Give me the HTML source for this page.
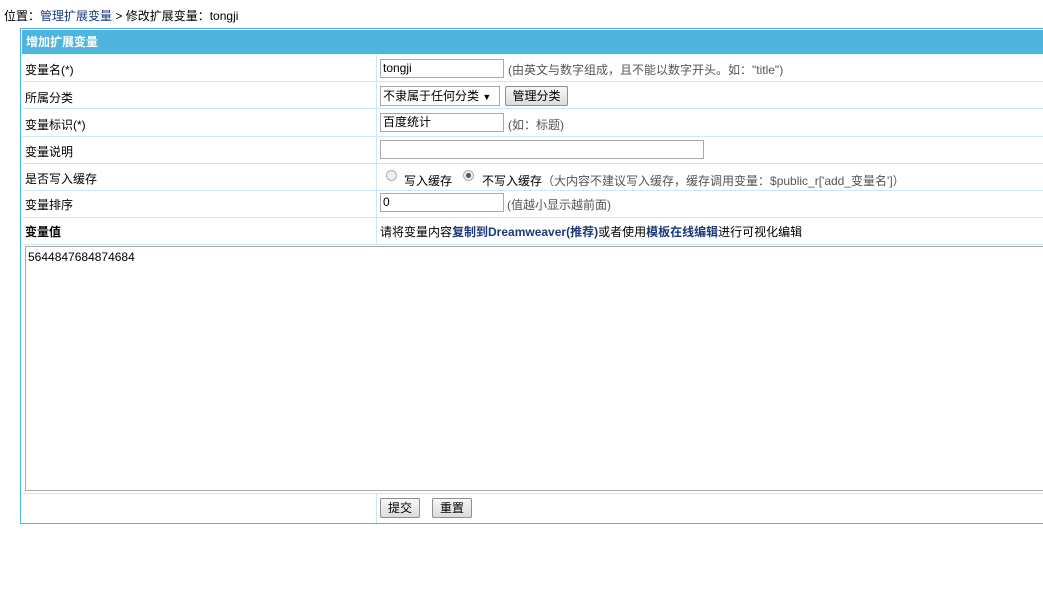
<!DOCTYPE html>
<html><head><meta charset="utf-8"><style>
body{margin:0;width:1043px;height:591px;overflow:hidden;background:#fff;font-family:"Liberation Sans","Noto Sans CJK SC",sans-serif;font-size:12px;color:#000;position:relative}
.a{position:absolute;white-space:nowrap}
a{color:#1a3a7a;text-decoration:none}
.tbl{position:absolute;left:20px;top:28px;width:1040px;height:494px;border:1px solid #4fb4de;border-right:none}
.hd{position:absolute;left:1px;top:1px;right:0;height:24px;background:#4fb4de;color:#fff;font-weight:bold;line-height:24px;padding-left:4px;font-size:12px}
.row{position:absolute;left:1px;right:0;border-bottom:1px solid #cde8f2}
.vl{position:absolute;left:355px;top:26px;height:190px;border-left:1px solid #cde8f2}
.inp{position:absolute;height:18px;border:1px solid #a9a9a9;box-sizing:border-box;font-size:12px;line-height:16px;padding-left:2px;background:#fff}
.btn{position:absolute;height:20px;border:1px solid #8e8e8e;background:linear-gradient(#f7f7f7,#dcdcdc);box-sizing:border-box;line-height:18px;text-align:center;border-radius:2px}
.g{color:#555}
.rad{position:absolute;width:11px;height:11px;border-radius:50%;border:1px solid #b0b0b0;background:#eee;box-sizing:border-box}
</style></head><body>
<div class="a" style="left:4px;top:7px">位置：<a>管理扩展变量</a> &gt; 修改扩展变量：tongji</div>
<div class="tbl">
<div class="hd">增加扩展变量</div>
<div class="row" style="top:26px;height:26px"></div>
<div class="row" style="top:53px;height:26px"></div>
<div class="row" style="top:80px;height:27px"></div>
<div class="row" style="top:108px;height:26px"></div>
<div class="row" style="top:135px;height:26px"></div>
<div class="row" style="top:162px;height:26px"></div>
<div class="row" style="top:189px;height:26px"></div>
<div class="row" style="top:216px;height:248px"></div>
<div class="vl"></div>
<div class="vl" style="top:465px;height:29px"></div>
</div>
<div class="a" style="left:25px;top:61px">变量名(*)</div>
<div class="a" style="left:25px;top:89px">所属分类</div>
<div class="a" style="left:25px;top:116px">变量标识(*)</div>
<div class="a" style="left:25px;top:143px">变量说明</div>
<div class="a" style="left:25px;top:170px">是否写入缓存</div>
<div class="a" style="left:25px;top:196px">变量排序</div>
<div class="a" style="left:25px;top:223px;font-weight:bold">变量值</div>

<div class="inp" style="left:380px;top:59px;width:124px;height:19px">tongji</div>
<div class="a g" style="left:508px;top:61px">(由英文与数字组成，且不能以数字开头。如："title")</div>
<div class="inp" style="left:380px;top:86px;width:120px;height:20px;line-height:18px">不隶属于任何分类 <span style="font-size:9px">▼</span></div>
<div class="btn" style="left:505px;top:86px;width:63px">管理分类</div>
<div class="inp" style="left:380px;top:113px;width:124px;height:19px">百度统计</div>
<div class="a g" style="left:508px;top:116px">(如：标题)</div>
<div class="inp" style="left:380px;top:140px;width:324px;height:19px"></div>
<div class="rad" style="left:386px;top:170px"></div>
<div class="a" style="left:404px;top:172px">写入缓存</div>
<div class="rad" style="left:463px;top:170px"></div>
<div style="position:absolute;left:466px;top:173px;width:5px;height:5px;border-radius:50%;background:#555"></div>
<div class="a" style="left:482px;top:172px">不写入缓存<span class="g">（大内容不建议写入缓存，缓存调用变量：$public_r['add_变量名']）</span></div>
<div class="inp" style="left:380px;top:193px;width:124px;height:19px">0</div>
<div class="a g" style="left:507px;top:196px">(值越小显示越前面)</div>
<div class="a" style="left:380px;top:223px">请将变量内容<a style="font-weight:bold">复制到Dreamweaver(推荐)</a>或者使用<a style="font-weight:bold">模板在线编辑</a>进行可视化编辑</div>
<div style="position:absolute;left:25px;top:246px;width:1030px;height:245px;border:1px solid #a9a9a9;box-sizing:border-box"></div>
<div class="a" style="left:28px;top:250px">5644847684874684</div>
<div class="btn" style="left:380px;top:498px;width:40px">提交</div>
<div class="btn" style="left:432px;top:498px;width:40px">重置</div>
</body></html>
